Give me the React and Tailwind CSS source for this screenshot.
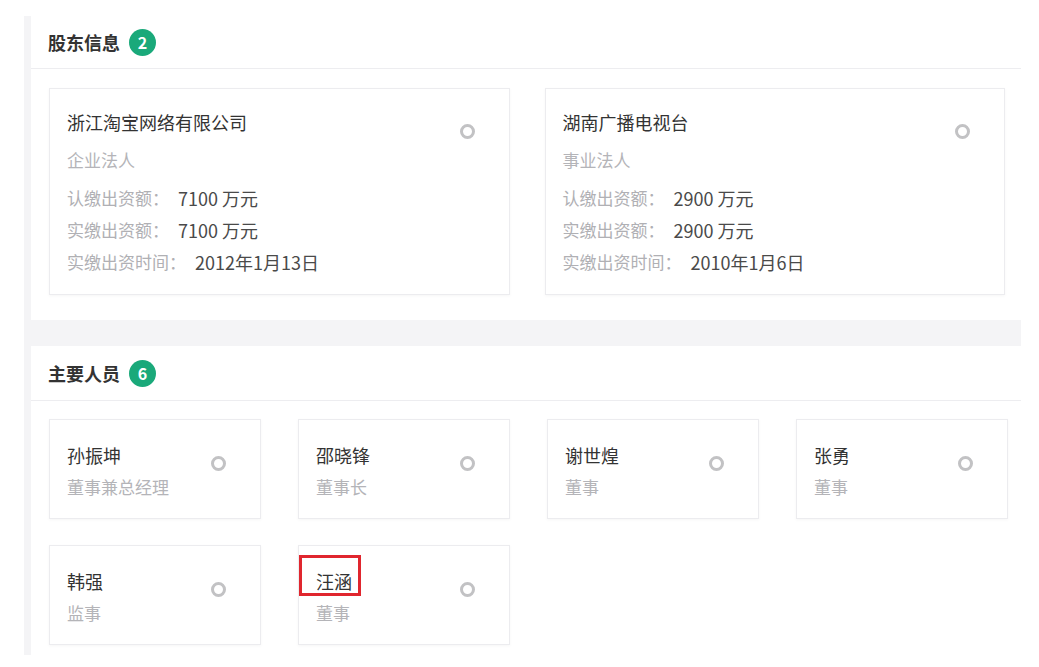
import React from "react";

const font = { fontFamily: '"Noto Sans CJK SC", "Noto Sans", "Liberation Sans", sans-serif' };

function Ring() {
  return <span className="block w-[15px] h-[15px] rounded-full border-[3px] border-[#c2c2c4]" />;
}

function Badge({ n }) {
  return (
    <span className="ml-[9px] flex h-[27px] w-[27px] items-center justify-center rounded-full bg-[#1aa97a] text-[16px] font-bold leading-none text-white">
      {n}
    </span>
  );
}

function Header({ title, n, h }) {
  return (
    <div className={`flex items-center border-b border-[#ededf0] pl-[17px] ${h}`}>
      <span className="text-[18px] font-bold text-[#333]">{title}</span>
      <Badge n={n} />
    </div>
  );
}

const holders = [
  { name: "浙江淘宝网络有限公司", type: "企业法人", a: "7100 万元", b: "7100 万元", d: "2012年1月13日" },
  { name: "湖南广播电视台", type: "事业法人", a: "2900 万元", b: "2900 万元", d: "2010年1月6日" },
];

const people = [
  { name: "孙振坤", role: "董事兼总经理" },
  { name: "邵晓锋", role: "董事长" },
  { name: "谢世煌", role: "董事" },
  { name: "张勇", role: "董事" },
  { name: "韩强", role: "监事" },
  { name: "汪涵", role: "董事", mark: true },
];

function Line({ label, value }) {
  return (
    <div className="flex h-[24px] items-center">
      <span className="text-[17px] text-[#b0b0b4]">{label}</span>
      <span className="ml-[9px] text-[18px] text-[#4a4a4a]">{value}</span>
    </div>
  );
}

export default function App() {
  return (
    <div className="min-h-[667px] w-[1039px] bg-white pt-[16px]" style={font}>
      <div className="ml-[24px] w-[997px] bg-[#f4f4f6] pl-[7px]">
        <section className="bg-white">
          <Header title="股东信息" n="2" h="h-[53px]" />
          <div className="grid grid-cols-2 gap-x-[35px] pl-[18px] pr-[16px] pt-[19px] pb-[25px]">
            {holders.map((c) => (
              <div key={c.name} className="relative h-[207px] border border-[#ececef] bg-white pl-[17px] pt-[21px] shadow-[0_1px_3px_rgba(0,0,0,0.04)]">
                <div className="flex h-[24px] items-center text-[18px] text-[#333]">{c.name}</div>
                <div className="mt-[14px] flex h-[24px] items-center text-[17px] text-[#b4b4b8]">{c.type}</div>
                <div className="mt-[14px] flex flex-col gap-[8px]">
                  <Line label="认缴出资额：" value={c.a} />
                  <Line label="实缴出资额：" value={c.b} />
                  <Line label="实缴出资时间：" value={c.d} />
                </div>
                <div className="absolute right-[34px] top-[35px]"><Ring /></div>
              </div>
            ))}
          </div>
        </section>
        <div className="h-[26px]" />
        <section className="bg-white">
          <Header title="主要人员" n="6" h="h-[55px]" />
          <div className="grid grid-cols-4 gap-x-[37px] gap-y-[26px] pl-[18px] pr-[13px] pt-[18px] pb-[10px]">
            {people.map((p) => (
              <div key={p.name} className="relative h-[100px] border border-[#ececef] bg-white pl-[17px] pt-[23px] shadow-[0_1px_3px_rgba(0,0,0,0.04)]">
                <div className="flex h-[24px] items-center text-[18px] text-[#333]">
                  <span className="relative">
                    {p.name}
                    {p.mark && (
                      <span className="absolute left-[-17px] top-[-13px] h-[41px] w-[62px] border-[3px] border-[#e0262e]" />
                    )}
                  </span>
                </div>
                <div className="mt-[8px] flex h-[24px] items-center text-[17px] text-[#b4b4b8]">{p.role}</div>
                <div className="absolute right-[34px] top-[36px]"><Ring /></div>
              </div>
            ))}
          </div>
        </section>
      </div>
    </div>
  );
}
